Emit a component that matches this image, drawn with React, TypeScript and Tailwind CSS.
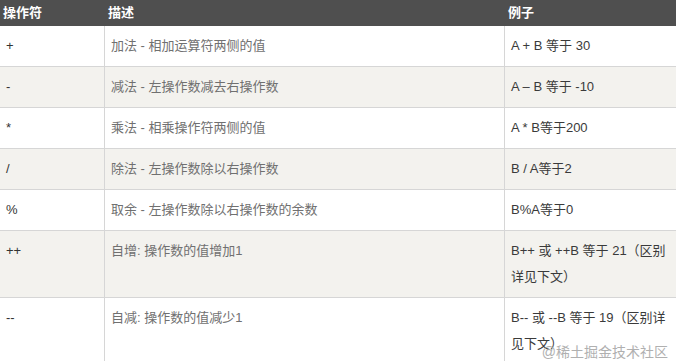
import React from "react";

const rows: { op: string; desc: string; ex: string; alt: boolean }[] = [
  { op: "+", desc: "加法 - 相加运算符两侧的值", ex: "A + B 等于 30", alt: false },
  { op: "-", desc: "减法 - 左操作数减去右操作数", ex: "A – B 等于 -10", alt: true },
  { op: "*", desc: "乘法 - 相乘操作符两侧的值", ex: "A * B等于200", alt: false },
  { op: "/", desc: "除法 - 左操作数除以右操作数", ex: "B / A等于2", alt: true },
  { op: "%", desc: "取余 - 左操作数除以右操作数的余数", ex: "B%A等于0", alt: false },
  { op: "++", desc: "自增: 操作数的值增加1", ex: "B++ 或 ++B 等于 21（区别详见下文）", alt: true },
  { op: "--", desc: "自减: 操作数的值减少1", ex: "B-- 或 --B 等于 19（区别详见下文）", alt: false },
];

export default function App() {
  return (
    <div
      className="relative w-[676px] h-[361px] overflow-hidden bg-white text-[13px]"
      style={{ fontFamily: '"Liberation Sans", "Noto Sans CJK SC", sans-serif' }}
    >
      <div className="grid grid-cols-[104px_400px_1fr] h-[26px] bg-[#4f4f4f] text-white font-bold leading-[26px]">
        <div className="pl-[3px]">操作符</div>
        <div className="pl-[4px]">描述</div>
        <div className="pl-[4px]">例子</div>
      </div>
      {rows.map((r, i) => (
        <div
          key={i}
          className={
            "grid grid-cols-[104px_400px_1fr] border-b border-[#d6d6d6] leading-[26px] " +
            (r.alt ? "bg-[#f3f2ee]" : "bg-white")
          }
        >
          <div className="px-[6px] py-[7px] text-[#333]">{r.op}</div>
          <div className="border-l border-[#d6d6d6] px-[6px] py-[7px] text-[#707070]">{r.desc}</div>
          <div className="border-l border-[#d6d6d6] px-[6px] py-[7px] text-[#3a3a3a]">{r.ex}</div>
        </div>
      ))}
      <div className="absolute right-[8px] top-[342px] text-[14px] leading-[20px] text-[#a8a8a8] opacity-90">
        @稀土掘金技术社区
      </div>
    </div>
  );
}
